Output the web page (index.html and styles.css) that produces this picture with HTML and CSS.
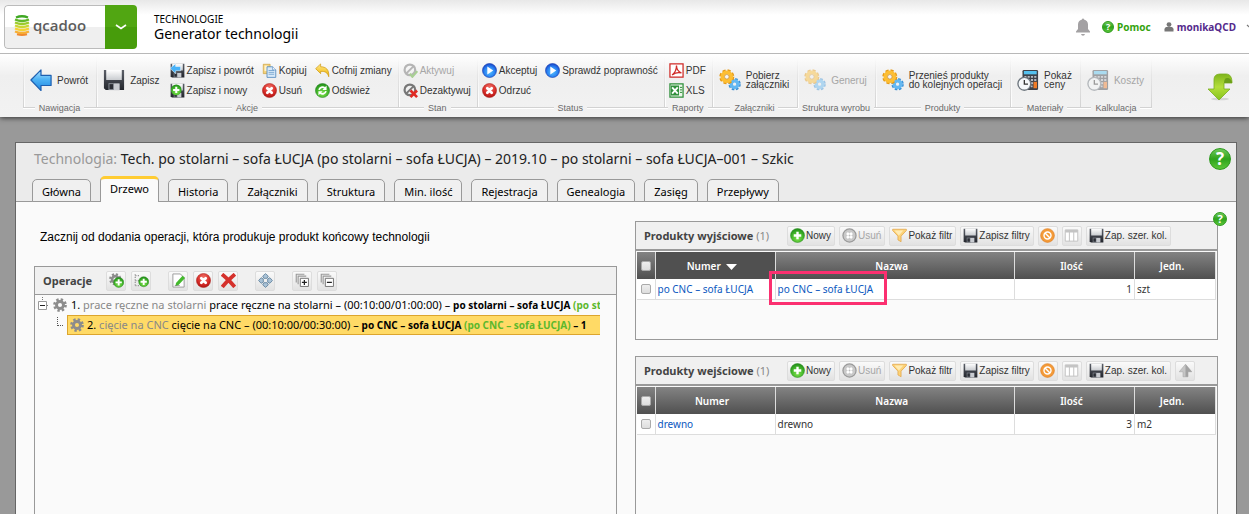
FILE: index.html
```html
<!DOCTYPE html>
<html lang="pl">
<head>
<meta charset="utf-8">
<title>Generator technologii</title>
<link rel="stylesheet" href="styles.css">
</head>
<body>
<svg class="sprite" aria-hidden="true">
  <defs>
    <linearGradient id="gBlue" x1="0" y1="0" x2="0" y2="1"><stop offset="0" stop-color="#b5e4ff"/><stop offset=".45" stop-color="#4fb4f5"/><stop offset="1" stop-color="#1f86e0"/></linearGradient>
    <radialGradient id="gPlay" cx=".5" cy=".6" r=".6"><stop offset="0" stop-color="#58c2ff"/><stop offset=".6" stop-color="#2b84f2"/><stop offset="1" stop-color="#1742c8"/></radialGradient>
    <radialGradient id="gGreen" cx=".5" cy=".7" r=".7"><stop offset="0" stop-color="#7fe04c"/><stop offset=".6" stop-color="#42b52a"/><stop offset="1" stop-color="#1f8a18"/></radialGradient>
    <radialGradient id="gRed" cx=".5" cy=".3" r=".7"><stop offset="0" stop-color="#f0756b"/><stop offset=".6" stop-color="#d9302b"/><stop offset="1" stop-color="#b01412"/></radialGradient>
    <linearGradient id="gGray" x1="0" y1="0" x2="0" y2="1"><stop offset="0" stop-color="#c4c4c4"/><stop offset="1" stop-color="#9a9a9a"/></linearGradient>
    <linearGradient id="gYellow" x1="0" y1="0" x2="0" y2="1"><stop offset="0" stop-color="#ffe88a"/><stop offset="1" stop-color="#f0b400"/></linearGradient>
    <linearGradient id="gLime" x1="0" y1="0" x2="0" y2="1"><stop offset="0" stop-color="#7fb51c"/><stop offset=".5" stop-color="#b4de3a"/><stop offset="1" stop-color="#86c41c"/></linearGradient>
    <linearGradient id="gSlate" x1="0" y1="0" x2="0" y2="1"><stop offset="0" stop-color="#5c6069"/><stop offset="1" stop-color="#23262d"/></linearGradient>
    <linearGradient id="gSteel" x1="0" y1="0" x2="0" y2="1"><stop offset="0" stop-color="#fff"/><stop offset="1" stop-color="#c9ccd0"/></linearGradient>
  </defs>
  <symbol id="back" viewBox="0 0 24 24"><path d="M1 12 12 1v6h11v11H12v5.500z" fill="url(#gBlue)" stroke="#1d5fb0" stroke-width="1.300" stroke-linejoin="round"/></symbol>
  <symbol id="disk" viewBox="0 0 24 24"><path d="M1 1h22v22H3l-2-2z" fill="url(#gSlate)"/><path d="M3.500 1h17v11h-17z" fill="url(#gSteel)"/><path d="M6 15.500h12V23H6z" fill="#8d929a"/><path d="M7 16.500h4V22H7z" fill="#2a2d34"/><path d="M12 16h6v7h-6z" fill="#c8cbd0"/></symbol>
  <symbol id="disk-back" viewBox="0 0 24 24"><use href="#disk"/><path d="M0 8.500 9 1v4.500h8v7H9V17z" fill="#48b2f8" stroke="#fff" stroke-width=".8"/></symbol>
  <symbol id="disk-plus" viewBox="0 0 24 24"><use href="#disk"/><circle cx="10" cy="11" r="8.500" fill="url(#gGreen)"/><path d="M10 6v10M5 11h10" stroke="#fff" stroke-width="3.200"/></symbol>
  <symbol id="copy" viewBox="0 0 24 24"><path d="M2 2h11v15H2z" fill="#f3d078" stroke="#c79a35"/><path d="M4 4h5v9H4z" fill="#fff3cc"/><path d="M8 6h9l5 5v12H8z" fill="#d8e9f8" stroke="#4d85bd" stroke-width="1.300"/><path d="M10.500 12h9M10.500 15h9M10.500 18h9" stroke="#6e9fcd" stroke-width="1.300"/><path d="M17 6v5h5" fill="#fff" stroke="#4d85bd"/></symbol>
  <symbol id="undo" viewBox="0 0 24 24"><path d="M1 9 9 1.500V6c8 0 14 4 13 16-2-7-6-9-13-8.500V17z" fill="url(#gYellow)" stroke="#c98e00" stroke-linejoin="round"/></symbol>
  <symbol id="cancel" viewBox="0 0 24 24"><circle cx="12" cy="12" r="11.300" fill="url(#gRed)" stroke="#a71613" stroke-width=".8"/><path d="m8.500 8.500 7 7M15.500 8.500l-7 7" stroke="#fff" stroke-width="4.400" stroke-linecap="round"/></symbol>
  <symbol id="cancel-off" viewBox="0 0 24 24"><circle cx="12" cy="12" r="10.500" fill="#c9c9c9" stroke="#9a9a9a" stroke-width="2"/><path d="m8 8 8 8M16 8l-8 8" stroke="#fff" stroke-width="4"/><circle cx="12" cy="12" r="1.500" fill="#bbb"/></symbol>
  <symbol id="refresh" viewBox="0 0 24 24"><circle cx="12" cy="12" r="11.300" fill="url(#gGreen)" stroke="#1d7e18" stroke-width=".8"/><path d="M6.500 11a5.500 5.500 0 0 1 9-3M17.500 13a5.500 5.500 0 0 1-9 3" fill="none" stroke="#fff" stroke-width="2.800"/><path d="m18.500 4v7h-6.500zM5.500 20v-7H12z" fill="#fff"/></symbol>
  <symbol id="activate" viewBox="0 0 24 24"><circle cx="11" cy="11" r="8.500" fill="none" stroke="#b5b5b5" stroke-width="3.500"/><path d="M17 5 5 17" stroke="#b5b5b5" stroke-width="3"/><path d="m11 17 4 5 8-9" fill="none" stroke="#a9cf94" stroke-width="3.500"/></symbol>
  <symbol id="deactivate" viewBox="0 0 24 24"><circle cx="11" cy="11" r="8.500" fill="none" stroke="#777" stroke-width="3.500"/><path d="M17 5 5 17" stroke="#777" stroke-width="3"/><path d="m12 12 10.500 10.500M22.500 12 12 22.500" stroke="#e02a24" stroke-width="4.200"/></symbol>
  <symbol id="play" viewBox="0 0 24 24"><circle cx="12" cy="12" r="11.200" fill="url(#gPlay)" stroke="#173fae"/><path d="M8.500 5.500v13l9.500-6.500z" fill="#fff"/></symbol>
  <symbol id="pdf" viewBox="0 0 24 24"><path d="M1.500 1.500h21v21h-21z" fill="#fff" stroke="#cf2a27" stroke-width="2"/><path d="M5 19c4-3 7-9 7-15 0 6 3 10 8 12-5-1.500-10-.5-15 3z" fill="none" stroke="#cf2a27" stroke-width="2"/></symbol>
  <symbol id="xls" viewBox="0 0 24 24"><path d="M1.500 1.500h21v21h-21z" fill="#eaf6e8" stroke="#2f8f3a" stroke-width="2"/><path d="M3 4h13v16H3z" fill="#2f8f3a"/><path d="m5 7 9 10M14 7 5 17" stroke="#fff" stroke-width="3"/><path d="M17.500 7H21M17.500 11H21M17.500 15H21" stroke="#2f8f3a" stroke-width="1.600"/></symbol>
  <symbol id="gears" viewBox="0 0 24 24"><circle cx="17" cy="16.500" r="4.800" fill="none" stroke="#3a8fd6" stroke-width="4" stroke-dasharray="2.400 1.370"/><circle cx="17" cy="16.500" r="3.600" fill="none" stroke="#63b8f2" stroke-width="3.600"/><circle cx="8.500" cy="8.500" r="6" fill="none" stroke="#e59a18" stroke-width="4.400" stroke-dasharray="2.900 1.810"/><circle cx="8.500" cy="8.500" r="4.800" fill="none" stroke="#fdbe33" stroke-width="4.200"/><circle cx="8.500" cy="8.500" r="2.500" fill="#f4f4f4" stroke="#c9800c" stroke-width=".7"/></symbol>
  <symbol id="calc" viewBox="0 0 24 24"><rect x="6" y="1" width="17" height="22" rx="1.500" fill="#3f4249"/><path d="M7.500 2.200h14v3.600h-14z" fill="#55c1ef"/><path d="M8 8.500h14M8 12h14M8 15.500h14M8 19h9" stroke="#b9bcc2" stroke-width="2" stroke-dasharray="2.300 1.300"/><path d="M18 14h3.800v7H18z" fill="#f07c28"/><circle cx="8" cy="16.200" r="7" fill="#f5f8fa" stroke="#6f777f" stroke-width="1.500"/><path d="M8 12v4.500h4" fill="none" stroke="#333" stroke-width="1.400"/></symbol>
  <symbol id="download" viewBox="0 0 26 28"><ellipse cx="13" cy="26" rx="9" ry="1.300" fill="#d4d4d4"/><path d="M7 16V7C7 2 10 1 14 1h5c4 0 6 3 6 9h-8v6h6L12 27 1 16z" fill="url(#gLime)" stroke="#7aaf20" stroke-width=".8"/><path d="M17 10c0-3 1-5 3-5 3 0 5 2 5 5z" fill="#6b9f18"/></symbol>
  <symbol id="bell" viewBox="0 0 14 18"><path d="M6 1.500a1 1 0 0 1 2 0c2.500.6 4 2.400 4 5v4.500l2 2.500v1H0v-1L2 11V6.500c0-2.600 1.500-4.400 4-5zM5 16h4q-.4 1.700-2 1.700T5 16z" fill="#a3a1a3"/></symbol>
  <symbol id="user" viewBox="0 0 10 10"><circle cx="5" cy="2.600" r="2.400" fill="#777"/><path d="M.5 9.500V7.300C.5 5.500 2 5 3.200 5h3.600c1.200 0 2.700.5 2.700 2.300v2.200z" fill="#777"/></symbol>
  <symbol id="gear" viewBox="0 0 24 24"><circle cx="12" cy="12" r="9.500" fill="none" stroke="#8c8c8c" stroke-width="4.500" stroke-dasharray="4 3.460"/><circle cx="12" cy="12" r="6" fill="none" stroke="#8c8c8c" stroke-width="5"/></symbol>
  <symbol id="gear-plus" viewBox="0 0 24 24"><use href="#gear" width="20" height="20"/><circle cx="15.500" cy="15" r="8" fill="url(#gGreen)" stroke="#2a8a20" stroke-width=".8"/><path d="M15.500 10v10M10.500 15h10" stroke="#fff" stroke-width="3"/></symbol>
  <symbol id="tree-plus" viewBox="0 0 24 24"><path d="M2 2v19M2 4h8M2 12h6M2 20h6" stroke="#999" stroke-width="2" stroke-dasharray="2 2"/><circle cx="15.500" cy="14" r="8" fill="url(#gGreen)" stroke="#2a8a20" stroke-width=".8"/><path d="M15.500 9v10M10.500 14h10" stroke="#fff" stroke-width="3"/></symbol>
  <symbol id="edit" viewBox="0 0 24 24"><path d="M3 1.500h12l6 6v15H3z" fill="#fff" stroke="#9a9a9a" stroke-width="1.500"/><path d="M8 16 18.500 4.500l4 3.500L12 19l-5 2z" fill="#43b92c"/><path d="M6 20h8" stroke="#777"/></symbol>
  <symbol id="cross" viewBox="0 0 24 24"><path d="M4 4c5 4 11 10 16 16M20 4C14 9 8 15 4 20" fill="none" stroke="#d5312c" stroke-width="6" stroke-linecap="square"/></symbol>
  <symbol id="move" viewBox="0 0 24 24"><g fill="#a9c2d6" stroke="#5d7f9b" stroke-width="1.300"><path d="m12 1 4.500 4-2 3.500h-5L7.500 5zM12 23l4.500-4-2-3.500h-5l-2 3.500zM1 12l4-4.500 3.500 2v5L5 16.500zM23 12l-4-4.500-3.500 2v5l3.500 2z"/></g></symbol>
  <symbol id="layers-plus" viewBox="0 0 24 24"><path d="M2 15V2h13M5 18V5h13" fill="none" stroke="#999" stroke-width="1.800"/><path d="M8.500 8.500h13v13h-13z" fill="#fff" stroke="#777" stroke-width="1.600"/><path d="M15 11v8M11 15h8" stroke="#222" stroke-width="2"/></symbol>
  <symbol id="layers-minus" viewBox="0 0 24 24"><path d="M2 15V2h13M5 18V5h13" fill="none" stroke="#999" stroke-width="1.800"/><path d="M8.500 8.500h13v13h-13z" fill="#fff" stroke="#777" stroke-width="1.600"/><path d="M11 15h8" stroke="#222" stroke-width="2"/></symbol>
  <symbol id="plus" viewBox="0 0 24 24"><circle cx="12" cy="12" r="11.200" fill="url(#gGreen)" stroke="#2a8a20" stroke-width=".8"/><path d="M12 6v12M6 12h12" stroke="#fff" stroke-width="3.800"/></symbol>
  <symbol id="funnel" viewBox="0 0 24 24"><path d="M1 2h22v2l-8.500 9v9L9.500 19v-6L1 4z" fill="#fcd277" stroke="#e0a44a" stroke-width="1.200" stroke-linejoin="round"/><path d="M4 4h14l-7 8z" fill="#ffecb5"/></symbol>
  <symbol id="ban" viewBox="0 0 24 24"><circle cx="12" cy="12" r="11" fill="#f39a38" stroke="#dd7a1c"/><circle cx="12" cy="12" r="5.600" fill="none" stroke="#fff" stroke-width="2.300"/><path d="m8 8 8 8" stroke="#fff" stroke-width="2.300"/></symbol>
  <symbol id="columns" viewBox="0 0 24 24"><path d="M2 3h20v18H2z" fill="#fff" stroke="#c4c4c4" stroke-width="1.600"/><path d="M2 3h20v4H2zM7.800 7h1.600v14H7.800zM14.800 7h1.600v14h-1.600z" fill="#c4c4c4"/></symbol>
  <symbol id="up" viewBox="0 0 24 24"><path d="M12 2 22 14h-6v8H8v-8H2z" fill="#c6c6c6" stroke="#aaa"/><path d="M12 2 22 14h-6v8h-4z" fill="#a2a2a2"/></symbol>
</svg>

<header class="top">
  <div class="brand">
    <a class="logo" href="#">
      <svg class="logo-mark" viewBox="0 0 16 21" aria-hidden="true"><g fill="none" stroke-width="2.300"><path d="M2 2.500q6-2.500 12 0" stroke="#3fa823"/><path d="M1 4.500q7 3 14 0" stroke="#62b828"/><path d="M1 7.500q7 3 14 0" stroke="#9bcb2c"/><path d="M1 10.500q7 3 14 0" stroke="#cbd632"/><path d="M1 13.500q7 3 14 0" stroke="#f3d333"/><path d="M1 16.500q7 3 14 0" stroke="#f8b033"/><path d="M3 19.200q5 1.500 10 0" stroke="#f08a2e" stroke-width="2"/></g></svg>
      <span>qcadoo</span>
    </a>
    <button class="brand-menu" aria-label="Menu"><svg viewBox="0 0 12 6" aria-hidden="true"><path d="m1 1 5 3.500L11 1" fill="none" stroke="#fff" stroke-width="1.600"/></svg></button>
  </div>
  <div class="heading">
    <p class="module">TECHNOLOGIE</p>
    <h1>Generator technologii</h1>
  </div>
  <nav class="account">
    <svg class="bell"><use href="#bell"/></svg>
    <a class="help-link" href="#"><span class="q q-xs">?</span>Pomoc</a>
    <a class="user-link" href="#"><svg class="i10"><use href="#user"/></svg>monikaQCD</a>
    <svg class="caret" viewBox="0 0 10 6" aria-hidden="true"><path d="m1 1 4 3.500L9 1" fill="none" stroke="#777" stroke-width="1.300"/></svg>
  </nav>
</header>

<div class="ribbon">
  <section class="group">
    <div class="tools"><button class="big"><svg class="i22"><use href="#back"/></svg>Powrót</button></div>
    <h2>Nawigacja</h2>
  </section>
  <section class="group">
    <div class="tools">
      <button class="big"><svg class="i22"><use href="#disk"/></svg>Zapisz</button>
      <div class="stack"><button><svg><use href="#disk-back"/></svg>Zapisz i powrót</button><button><svg><use href="#disk-plus"/></svg>Zapisz i nowy</button></div>
      <div class="stack"><button><svg><use href="#copy"/></svg>Kopiuj</button><button><svg><use href="#cancel"/></svg>Usuń</button></div>
      <div class="stack"><button><svg><use href="#undo"/></svg>Cofnij zmiany</button><button><svg><use href="#refresh"/></svg>Odśwież</button></div>
    </div>
    <h2>Akcje</h2>
  </section>
  <section class="group">
    <div class="tools"><div class="stack"><button disabled><svg><use href="#activate"/></svg>Aktywuj</button><button><svg><use href="#deactivate"/></svg>Dezaktywuj</button></div></div>
    <h2>Stan</h2>
  </section>
  <section class="group">
    <div class="tools">
      <div class="stack"><button><svg><use href="#play"/></svg>Akceptuj</button><button><svg><use href="#cancel"/></svg>Odrzuć</button></div>
      <div class="stack"><button><svg><use href="#play"/></svg>Sprawdź poprawność</button></div>
    </div>
    <h2>Status</h2>
  </section>
  <section class="group">
    <div class="tools"><div class="stack"><button><svg><use href="#pdf"/></svg>PDF</button><button><svg><use href="#xls"/></svg>XLS</button></div></div>
    <h2>Raporty</h2>
  </section>
  <section class="group">
    <div class="tools"><button class="big"><svg class="i22"><use href="#gears"/></svg><span>Pobierz<br>załączniki</span></button></div>
    <h2>Załączniki</h2>
  </section>
  <section class="group">
    <div class="tools"><button class="big" disabled><svg class="i22 faded"><use href="#gears"/></svg>Generuj</button></div>
    <h2>Struktura wyrobu</h2>
  </section>
  <section class="group">
    <div class="tools"><button class="big"><svg class="i22"><use href="#gears"/></svg><span>Przenieś produkty<br>do kolejnych operacji</span></button></div>
    <h2>Produkty</h2>
  </section>
  <section class="group">
    <div class="tools"><button class="big"><svg class="i22"><use href="#calc"/></svg><span>Pokaż<br>ceny</span></button></div>
    <h2>Materiały</h2>
  </section>
  <section class="group">
    <div class="tools"><button class="big" disabled><svg class="i22 faded"><use href="#calc"/></svg>Koszty</button></div>
    <h2>Kalkulacja</h2>
  </section>
  <button class="download" aria-label="Rozwiń"><svg><use href="#download"/></svg></button>
</div>

<main class="window">
  <div class="window-head">
    <div class="title-row">
      <h2 class="title"><span>Technologia:</span> Tech. po stolarni – sofa ŁUCJA (po stolarni – sofa ŁUCJA) – 2019.10 – po stolarni – sofa ŁUCJA–001 – Szkic</h2>
      <button class="q q-lg">?</button>
    </div>
    <nav class="tabs">
      <a href="#">Główna</a><a href="#" class="active">Drzewo</a><a href="#">Historia</a><a href="#">Załączniki</a><a href="#">Struktura</a><a href="#">Min. ilość</a><a href="#">Rejestracja</a><a href="#">Genealogia</a><a href="#">Zasięg</a><a href="#">Przepływy</a>
    </nav>
  </div>
  <div class="content">
    <div class="left">
      <p class="hint">Zacznij od dodania operacji, która produkuje produkt końcowy technologii</p>
      <section class="panel tree-panel">
        <div class="bar">
          <h3>Operacje</h3>
          <div class="icons"><button aria-label="Dodaj operację"><svg><use href="#gear-plus"/></svg></button><button aria-label="Dodaj gałąź"><svg><use href="#tree-plus"/></svg></button></div>
          <div class="icons"><button aria-label="Edytuj"><svg><use href="#edit"/></svg></button><button aria-label="Usuń"><svg><use href="#cancel"/></svg></button><button aria-label="Usuń wszystko"><svg><use href="#cross"/></svg></button></div>
          <div class="icons"><button aria-label="Przenieś"><svg><use href="#move"/></svg></button></div>
          <div class="icons"><button aria-label="Rozwiń"><svg><use href="#layers-plus"/></svg></button><button aria-label="Zwiń"><svg><use href="#layers-minus"/></svg></button></div>
        </div>
        <div class="tree">
          <div class="node">
            <svg class="joint" viewBox="0 0 12 20" aria-hidden="true"><path d="M5.500 2v4M10 10.500h2" stroke="#777" stroke-dasharray="1 1"/><path d="M1.500 6.500h8v8h-8z" fill="#fff" stroke="#999"/><path d="M3 10.500h5" stroke="#222"/></svg>
            <span class="node-text"><svg class="i14"><use href="#gear"/></svg><span>1. <i>prace ręczne na stolarni</i> prace ręczne na stolarni – (00:10:00/01:00:00) – <b>po stolarni – sofa ŁUCJA <em>(po sto</em></b></span></span>
          </div>
          <div class="node child">
            <svg class="joint" viewBox="0 0 12 20" aria-hidden="true"><path d="M2.500 2v9M3 10.500h6" fill="none" stroke="#555" stroke-dasharray="1 1"/></svg>
            <span class="node-text selected"><svg class="i14"><use href="#gear"/></svg><span>2. <i>cięcie na CNC</i> cięcie na CNC – (00:10:00/00:30:00) – <b>po CNC – sofa ŁUCJA <em>(po CNC – sofa ŁUCJA)</em> – 1</b></span></span>
          </div>
        </div>
      </section>
    </div>
    <div class="right">
      <section class="panel grid-panel short">
        <button class="q q-sm">?</button>
        <div class="bar">
          <h3>Produkty wyjściowe <span>(1)</span></h3>
          <div class="actions"><button><svg><use href="#plus"/></svg>Nowy</button><button disabled><svg><use href="#cancel-off"/></svg>Usuń</button><button><svg><use href="#funnel"/></svg>Pokaż filtr</button><button><svg><use href="#disk"/></svg>Zapisz filtry</button><button aria-label="Wyczyść filtr"><svg><use href="#ban"/></svg></button><button aria-label="Kolumny"><svg><use href="#columns"/></svg></button><button><svg><use href="#disk"/></svg>Zap. szer. kol.</button></div>
        </div>
        <table>
          <colgroup><col class="c-check"><col class="c-num"><col class="c-name"><col class="c-qty"><col class="c-unit"></colgroup>
          <thead><tr><th><input type="checkbox" aria-label="Zaznacz wszystkie"></th><th class="sorted">Numer <svg class="sort" viewBox="0 0 11 6" aria-hidden="true"><path d="M0 0h11L5.500 6z" fill="#fff"/></svg></th><th>Nazwa</th><th>Ilość</th><th>Jedn.</th></tr></thead>
          <tbody><tr><td><input type="checkbox" aria-label="Zaznacz po CNC"></td><td><a href="#">po CNC – sofa ŁUCJA</a></td><td class="marked"><a href="#">po CNC – sofa ŁUCJA</a></td><td class="num">1</td><td>szt</td></tr></tbody>
        </table>
      </section>
      <section class="panel grid-panel">
        <div class="bar">
          <h3>Produkty wejściowe <span>(1)</span></h3>
          <div class="actions"><button><svg><use href="#plus"/></svg>Nowy</button><button disabled><svg><use href="#cancel-off"/></svg>Usuń</button><button><svg><use href="#funnel"/></svg>Pokaż filtr</button><button><svg><use href="#disk"/></svg>Zapisz filtry</button><button aria-label="Wyczyść filtr"><svg><use href="#ban"/></svg></button><button aria-label="Kolumny"><svg><use href="#columns"/></svg></button><button><svg><use href="#disk"/></svg>Zap. szer. kol.</button><button aria-label="W górę"><svg><use href="#up"/></svg></button></div>
        </div>
        <table>
          <colgroup><col class="c-check"><col class="c-num"><col class="c-name"><col class="c-qty"><col class="c-unit"></colgroup>
          <thead><tr><th><input type="checkbox" aria-label="Zaznacz wszystkie"></th><th>Numer</th><th>Nazwa</th><th>Ilość</th><th>Jedn.</th></tr></thead>
          <tbody><tr><td><input type="checkbox" aria-label="Zaznacz drewno"></td><td><a href="#">drewno</a></td><td>drewno</td><td class="num">3</td><td>m2</td></tr></tbody>
        </table>
      </section>
    </div>
  </div>
</main>
</body>
</html>
```

FILE: styles.css
```css
* { box-sizing: border-box; }
html, body { height: 100%; }
body {
  margin: 0;
  display: flex;
  flex-direction: column;
  overflow: hidden;
  background: #999;
  color: #000;
  font: 10px/14px "Noto Sans", "Open Sans", sans-serif;
}
h1, h2, h3, p { margin: 0; font-weight: normal; }
a { color: inherit; text-decoration: none; }
button {
  margin: 0;
  padding: 0;
  border: 0;
  background: none;
  color: #333;
  font: 10px/12px "Liberation Sans", Arial, sans-serif;
  text-align: left;
  white-space: nowrap;
}
svg { display: block; flex: none; }
.sprite { position: absolute; width: 0; height: 0; }
.i10 { width: 10px; height: 10px; }
.i14 { width: 14px; height: 14px; }
.i22 { width: 22px; height: 22px; }
.faded { opacity: 0.45; }

.q {
  display: flex;
  flex: none;
  align-items: center;
  justify-content: center;
  border: 1px solid #2c9a1c;
  border-radius: 50%;
  background: linear-gradient(#6fc95a, #2ea31b 50%, #5cc63a);
  color: #fff;
  font-family: "Open Sans", sans-serif;
  font-weight: bold;
}
.q-xs { width: 12px; height: 12px; font-size: 9px; line-height: 10px; }
.q-sm { width: 14px; height: 14px; font-size: 11px; line-height: 12px; }
.q-lg { width: 22px; height: 22px; font-size: 17px; line-height: 20px; }

.top {
  flex: none;
  position: relative;
  z-index: 1;
  display: flex;
  align-items: center;
  height: 54px;
  padding-left: 4px;
  border-bottom: 1px solid #b8b8b8;
  background: linear-gradient(#e8e8e8, #fff 15px);
}
.brand {
  display: flex;
  height: 44px;
  border-radius: 4px;
  overflow: hidden;
}
.logo {
  display: flex;
  align-items: center;
  gap: 3px;
  width: 101px;
  padding: 0 0 2px 9px;
  border: 1px solid #bbb;
  border-right: 0;
  border-radius: 4px 0 0 4px;
  background: linear-gradient(#fff 50%, #efefef 50%);
  color: #5c5c5c;
  font: 600 15px/20px "Open Sans", sans-serif;
}
.logo span { padding-bottom: 2px; }
.logo-mark { width: 16px; height: 21px; }
.brand-menu {
  width: 32px;
  display: flex;
  align-items: center;
  justify-content: center;
  background: linear-gradient(#51a612 50%, #479c0b 50%);
}
.brand-menu svg { width: 12px; height: 6px; }
.heading { padding-left: 17px; }
.module { font-size: 10px; line-height: 13px; }
h1 { font-size: 14px; line-height: 15px; }
.account {
  margin-left: auto;
  display: flex;
  align-items: center;
  font-weight: bold;
}
.bell { width: 14px; height: 18px; margin-right: 12px; }
.account a { display: flex; align-items: center; gap: 3px; }
.help-link { color: #35a310; margin-right: 13px; }
.user-link { color: #552a8c; }
.caret { width: 10px; height: 6px; margin: 0 -7px 0 10px; }

.ribbon {
  flex: none;
  position: relative;
  display: flex;
  align-items: flex-start;
  height: 63px;
  padding: 4px 16px 0 23px;
  background: linear-gradient(#fff, #efefef 22px, #f2f2f2);
  box-shadow: 0 1px 5px #333;
}
.group {
  display: flex;
  flex-direction: column;
  background:
    linear-gradient(#dcdcdc00, #d2d2d2) left top / 1px 50px no-repeat,
    linear-gradient(#fff0, #fff) 1px top / 1px 50px no-repeat;
}
.group:nth-last-of-type(1) {
  background:
    linear-gradient(#dcdcdc00, #d2d2d2) left top / 1px 50px no-repeat,
    linear-gradient(#dcdcdc00, #d2d2d2) right top / 1px 50px no-repeat;
}
.tools {
  display: flex;
  align-items: flex-start;
  gap: 8px;
  height: 43px;
  padding: 5px 6px 0 5px;
}
.group h2 {
  display: flex;
  align-items: center;
  gap: 4px;
  color: #6b6b6b;
  font: 9px/14px "Liberation Sans", Arial, sans-serif;
}
.group h2::before, .group h2::after {
  content: "";
  flex: 1;
  height: 2px;
  background: linear-gradient(#d2d2d2 50%, #fff 50%);
}
.ribbon button { display: flex; align-items: center; gap: 2px; }
.ribbon .big { gap: 5px; padding: 6px 2px 0; line-height: 9px; }
.stack { display: flex; flex-direction: column; gap: 5px; }
.stack svg { width: 15px; height: 15px; }
.stack button { height: 15px; }
button:disabled { color: #a6a6a6; }
.ribbon .download { margin: 15px 0 0 auto; }
.download svg { width: 26px; height: 28px; }

.window {
  flex: 1 0 auto;
  display: flex;
  flex-direction: column;
  margin: 25px 12px 0 15px;
  border: 1px solid #666;
  border-bottom: 0;
  background: #fafafa;
}
.window-head {
  display: flex;
  flex-direction: column;
  gap: 6px;
  padding: 5px 5px 0 16px;
  border-bottom: 1px solid #999;
  background: #ebebeb;
}
.title-row { display: flex; align-items: center; justify-content: space-between; }
.title { padding-left: 2px; color: #222; font-size: 14px; line-height: 20px; }
.title span { color: #999; }
.tabs { display: flex; align-items: flex-end; gap: 9px; margin-bottom: -1px; }
.tabs a {
  height: 23px;
  padding: 4px 9px 0;
  border: 1px solid #999;
  border-radius: 5px 5px 0 0;
  background: #f0f0f0;
  font-size: 11px;
  line-height: 15px;
}
.tabs .active {
  height: 26px;
  padding-top: 2px;
  border-top: 3px solid #fc3;
  border-bottom: 0;
  background: #fafafa;
}
.content {
  flex: 1;
  display: grid;
  grid-template-columns: 1fr 1fr;
  gap: 18px;
  padding: 19px 18px 0;
}
.left, .right { min-width: 0; display: flex; flex-direction: column; }
.right { gap: 16px; }
.hint {
  padding: 9px 6px 22px;
  font: 12px/14px "Liberation Sans", Arial, sans-serif;
}
.panel { position: relative; border: 1px solid #999; background: #fafafa; }
.tree-panel, .grid-panel { flex: 1; border-bottom: 0; }
.grid-panel.short { flex: none; height: 119px; border-bottom: 1px solid #999; }
.panel > .q { position: absolute; right: -10px; top: -10px; }
.bar {
  display: flex;
  align-items: center;
  height: 28px;
  padding-left: 8px;
  border-bottom: 1px solid #999;
  background: #f0f0f0;
}
.bar h3 { color: #444; font-size: 11px; font-weight: bold; }
.bar h3 span { color: #888; font-weight: normal; }
.icons, .actions { display: flex; gap: 5px; }
.icons { margin-right: 17px; }
.tree-panel h3 { min-width: 63px; }
.grid-panel h3 { min-width: 143px; }
.actions { gap: 4px; }
.bar button {
  display: flex;
  align-items: center;
  gap: 1px;
  height: 20px;
  padding: 0 3px 0 2px;
  border: 1px solid #ddd;
  border-radius: 2px;
  background: linear-gradient(#fafafa, #e2e2e2);
}
.bar button svg { width: 15px; height: 15px; }
.icons button, .bar button[aria-label] { width: 20px; padding: 0; justify-content: center; }
.tree { margin-right: 16px; padding: 0 0 0 2px; overflow: hidden; }
.node { display: flex; align-items: center; height: 20px; }
.child { padding-left: 18px; }
.joint { width: 12px; height: 20px; }
.node-text {
  flex: 1;
  display: flex;
  align-items: center;
  gap: 4px;
  height: 20px;
  padding-left: 4px;
  font-size: 11px;
  white-space: nowrap;
}
.node-text b { font-size: 10px; }
.node-text i { color: #888; font-style: normal; }
.node-text em { color: #5cb82c; font-style: normal; }
.selected { padding-left: 2px; gap: 3px; border: 1px solid #dca52e; border-right: 0; background: #ffda66; }
table {
  width: calc(100% - 2px);
  margin: 1px;
  table-layout: fixed;
  border-collapse: collapse;
}
.grid-panel .bar { border-bottom-width: 2px; height: 29px; }
.c-check { width: 18px; }
.c-num, .c-qty { width: 120px; }
.c-unit { width: 81px; }
thead tr { background: linear-gradient(#838383, #505050); }
th {
  height: 27px;
  padding: 0 8px 0 2px;
  border-right: 1px solid #ddd;
  color: #fff;
  font-weight: 600;
}
.sorted { background: #505050; }
.sort { display: inline-block; width: 11px; height: 6px; margin-left: 3px; }
td {
  height: 20px;
  padding: 0 2px;
  border-right: 1px solid #ddd;
  border-bottom: 1px solid #ddd;
  background: #fff;
  color: #333;
}
th:first-child, td:first-child { padding: 0; text-align: center; }
td a { color: #0b58c0; }
.num { text-align: right; }
input[type="checkbox"] {
  appearance: none;
  display: block;
  width: 10px;
  height: 10px;
  margin: 0 auto;
  border: 1px solid #aaa;
  border-radius: 2px;
  background: linear-gradient(#eee, #ddd);
}
.marked { position: relative; }
.marked::after {
  content: "";
  position: absolute;
  left: -7px;
  top: -8px;
  width: 112px;
  height: 28px;
  border: 3px solid #fb3070;
}
```
